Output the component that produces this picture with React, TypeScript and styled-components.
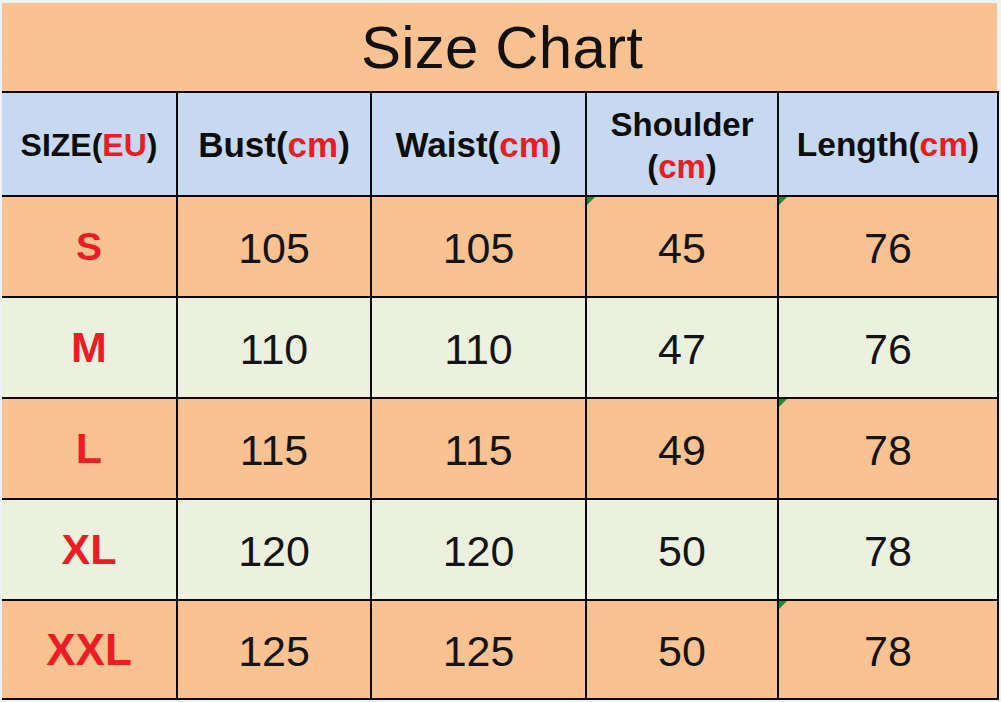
import styled, { createGlobalStyle } from 'styled-components';

const RED = '#ec1c24';

type Row = { size: string; sizeFont: number; values: number[]; tone: 'orange' | 'green'; marks: number[] };

const ROWS: Row[] = [
    { size: 'S', sizeFont: 39, values: [105, 105, 45, 76], tone: 'orange', marks: [2, 3] },
    { size: 'M', sizeFont: 43, values: [110, 110, 47, 76], tone: 'green', marks: [] },
    { size: 'L', sizeFont: 43, values: [115, 115, 49, 78], tone: 'orange', marks: [3] },
    { size: 'XL', sizeFont: 43, values: [120, 120, 50, 78], tone: 'green', marks: [] },
    { size: 'XXL', sizeFont: 44, values: [125, 125, 50, 78], tone: 'orange', marks: [3] },
];

const TONES = {
    orange: '#fac191',
    green: '#ecf1df',
    blue: '#c6d9f0',
};

export default function App() {
    return (
        <>
            <GlobalStyle />
            <Sheet>
                <Title>Size Chart</Title>
                <Grid>
                    <HeadCell $font={32}>
                        SIZE(<Red>EU</Red>)
                    </HeadCell>
                    <HeadCell $font={35}>
                        Bust(<Red>cm</Red>)
                    </HeadCell>
                    <HeadCell $font={35}>
                        Waist(<Red>cm</Red>)
                    </HeadCell>
                    <HeadCell $font={33}>
                        <StackedLabel>
                            <span>Shoulder</span>
                            <span>
                                (<Red>cm</Red>)
                            </span>
                        </StackedLabel>
                    </HeadCell>
                    <HeadCell $font={33.5}>
                        Length(<Red>cm</Red>)
                    </HeadCell>

                    {ROWS.map((row) => (
                        <RowGroup key={row.size}>
                            <SizeCell $tone={row.tone} $font={row.sizeFont}>
                                {row.size}
                            </SizeCell>
                            {row.values.map((v, i) => (
                                <ValueCell key={i} $tone={row.tone}>
                                    {row.marks.includes(i) && <Mark />}
                                    {v}
                                </ValueCell>
                            ))}
                        </RowGroup>
                    ))}
                </Grid>
            </Sheet>
        </>
    );
}

const GlobalStyle = createGlobalStyle`
    html, body {
        margin: 0;
        padding: 0;
        background: #eef2f5;
        font-family: "Liberation Sans", Arial, sans-serif;
    }
`;

const Sheet = styled.main`
    display: flex;
    flex-direction: column;
    width: 997px;
    margin: 3px 0 0 2px;
`;

const Title = styled.h1`
    display: flex;
    justify-content: center;
    align-items: center;
    height: 88px;
    margin: 0;
    padding-left: 5px;
    box-sizing: border-box;
    width: 995px;
    background: ${TONES.orange};
    color: #111;
    font-size: 60px;
    font-weight: 400;
    letter-spacing: 0.2px;
`;

const Grid = styled.div`
    display: grid;
    grid-template-columns: 174px 192px 213px 190px 218px;
    grid-template-rows: 102px 99px 99px 99px 99px 97px;
    gap: 2px;
    background: #0a0a0a;
    border-top: 2px solid #0a0a0a;
    border-bottom: 2px solid #0a0a0a;
    border-right: 2px solid #0a0a0a;
    width: max-content;
`;

const RowGroup = styled.div`
    display: contents;
`;

const Cell = styled.div`
    position: relative;
    display: flex;
    justify-content: center;
    align-items: center;
    text-align: center;
`;

const HeadCell = styled(Cell)<{ $font: number }>`
    background: ${TONES.blue};
    color: #0d0d0d;
    font-size: ${(p) => p.$font}px;
    font-weight: 700;
    padding-top: 2px;
`;

const StackedLabel = styled.div`
    display: flex;
    flex-direction: column;
    align-items: center;
    line-height: 42px;
    margin-top: 2px;
`;

const Red = styled.span`
    color: ${RED};
`;

const SizeCell = styled(Cell)<{ $tone: 'orange' | 'green'; $font: number }>`
    background: ${(p) => TONES[p.$tone]};
    color: ${RED};
    font-size: ${(p) => p.$font}px;
    font-weight: 700;
`;

const ValueCell = styled(Cell)<{ $tone: 'orange' | 'green' }>`
    background: ${(p) => TONES[p.$tone]};
    color: #141414;
    font-size: 43px;
    font-weight: 400;
    padding-top: 4px;
`;

const Mark = styled.span`
    position: absolute;
    top: 0;
    left: 0;
    width: 0;
    height: 0;
    border-top: 8px solid #1f8a2c;
    border-right: 8px solid transparent;
`;
